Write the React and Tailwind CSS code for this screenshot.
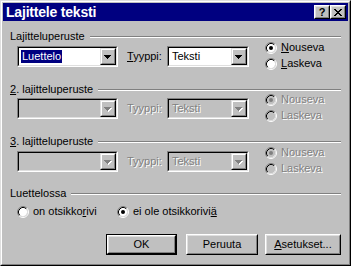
import React from "react";

const dis = "text-[#808080] [text-shadow:1px_1px_0_#ffffff]";

function Arrow({ disabled }) {
  const c = disabled ? "#808080" : "#000000";
  return (
    <svg width="8" height="5" viewBox="0 0 8 5" shapeRendering="crispEdges">
      {disabled && (
        <g fill="#ffffff">
          <rect x="1" y="1" width="7" height="1" />
          <rect x="2" y="2" width="5" height="1" />
          <rect x="3" y="3" width="3" height="1" />
          <rect x="4" y="4" width="1" height="1" />
        </g>
      )}
      <g fill={c}>
        <rect x="0" y="0" width="7" height="1" />
        <rect x="1" y="1" width="5" height="1" />
        <rect x="2" y="2" width="3" height="1" />
        <rect x="3" y="3" width="1" height="1" />
      </g>
    </svg>
  );
}

function Combo({ className, value, selected, disabled }) {
  return (
    <div className={`h-[21px] border border-t-[#808080] border-l-[#808080] border-r-white border-b-white ${className}`}>
      <div className={`h-full flex border border-t-black border-l-black border-r-[#dfdfdf] border-b-[#dfdfdf] ${disabled ? "bg-[#c0c0c0]" : "bg-white"}`}>
        <div className="flex-1 flex items-center pl-[2px] overflow-hidden">
          {value && (
            <span
              className={`px-px leading-[13px] h-[13px] ${selected ? "bg-[#000080] text-white" : disabled ? dis : "text-black"}`}
            >
              {value}
            </span>
          )}
        </div>
        <div className="w-[16px] h-full border border-t-[#dfdfdf] border-l-[#dfdfdf] border-r-black border-b-black">
          <div className="h-full border border-t-white border-l-white border-r-[#808080] border-b-[#808080] bg-[#c0c0c0] flex items-center justify-center pt-px">
            <Arrow disabled={disabled} />
          </div>
        </div>
      </div>
    </div>
  );
}

function Radio({ checked, disabled }) {
  return (
    <svg width="12" height="12" viewBox="0 0 12 12" className="shrink-0">
      <circle cx="6" cy="6" r="4.2" fill={disabled ? "#c0c0c0" : "#ffffff"} />
      <path d="M2.11 9.89 A5.5 5.5 0 0 1 9.89 2.11" fill="none" stroke="#808080" strokeWidth="1" />
      <path d="M9.89 2.11 A5.5 5.5 0 0 1 2.11 9.89" fill="none" stroke="#ffffff" strokeWidth="1" />
      <path d="M2.82 9.18 A4.5 4.5 0 0 1 9.18 2.82" fill="none" stroke="#000000" strokeWidth="1" />
      <path d="M9.18 2.82 A4.5 4.5 0 0 1 2.82 9.18" fill="none" stroke="#dfdfdf" strokeWidth="1" />
      {checked && <circle cx="6" cy="6" r="2" fill={disabled ? "#808080" : "#000000"} />}
    </svg>
  );
}

function RadioLabel({ checked, disabled, children, className = "" }) {
  return (
    <div className={`flex items-center h-[13px] ${className}`}>
      <Radio checked={checked} disabled={disabled} />
      <span className={`ml-[4px] leading-[13px] ${disabled ? dis : "text-black"}`}>{children}</span>
    </div>
  );
}

function Header({ children, className = "" }) {
  return (
    <div className={`flex items-center h-[13px] ${className}`}>
      <span className="leading-[13px] text-black whitespace-nowrap">{children}</span>
      <div className="flex-1 ml-[5px] h-[2px] border-t border-t-[#808080] border-b border-b-white" />
    </div>
  );
}

function SortRow({ disabled, className = "" }) {
  return (
    <div className={`flex items-start h-[21px] pl-[7px] ${className}`}>
      <Combo className="w-[101px]" value={disabled ? "" : "Luettelo"} selected={!disabled} disabled={disabled} />
      <div className="w-[40px] ml-[9px] h-[21px] flex items-center">
        <span className={`leading-[13px] ${disabled ? dis : "text-black"}`}>
          {disabled ? "Tyyppi:" : (<><span className="underline underline-offset-[1px]">T</span>yyppi:</>)}
        </span>
      </div>
      <Combo className="w-[82px]" value="Teksti" disabled={disabled} />
      <div className="ml-[16px] -mt-[5px] flex flex-col gap-[3px]">
        <RadioLabel checked disabled={disabled}>
          {disabled ? "Nouseva" : (<><span className="underline underline-offset-[1px]">N</span>ouseva</>)}
        </RadioLabel>
        <RadioLabel disabled={disabled}>
          {disabled ? "Laskeva" : (<><span className="underline underline-offset-[1px]">L</span>askeva</>)}
        </RadioLabel>
      </div>
    </div>
  );
}

function Button({ children, isDefault, className = "" }) {
  const inner = (
    <div className="h-full border border-t-white border-l-white border-r-black border-b-black">
      <div className="h-full border border-t-[#dfdfdf] border-l-[#dfdfdf] border-r-[#808080] border-b-[#808080] flex items-center justify-center bg-[#c0c0c0]">
        <span className="leading-[13px] text-black">{children}</span>
      </div>
    </div>
  );
  return (
    <div className={`h-[21px] ${isDefault ? "border border-black" : ""} ${className}`}>{inner}</div>
  );
}

function CapBtn({ children }) {
  return (
    <div className="w-[16px] h-[14px] border border-t-white border-l-white border-r-black border-b-black">
      <div className="h-full border border-t-[#dfdfdf] border-l-[#dfdfdf] border-r-[#808080] border-b-[#808080] bg-[#c0c0c0] flex items-center justify-center">
        {children}
      </div>
    </div>
  );
}

export default function App() {
  return (
    <div className="w-[351px] h-[266px] font-['Liberation_Sans',Arial,sans-serif] text-[11px] bg-[#c0c0c0] border border-t-[#dfdfdf] border-l-[#dfdfdf] border-r-black border-b-black">
      <div className="h-full border border-t-white border-l-white border-r-[#808080] border-b-[#808080] p-px flex flex-col">
        <div className="h-[18px] bg-[#000080] flex items-center pl-[3px] pr-[2px]">
          <span className="flex-1 text-white font-bold text-[14px] leading-[18px] tracking-[-0.2px]">Lajittele teksti</span>
          <CapBtn>
            <span className="font-bold text-[11px] leading-[10px] text-black">?</span>
          </CapBtn>
          <CapBtn>
            <svg width="8" height="7" viewBox="0 0 8 7" shapeRendering="crispEdges" fill="#000">
              <rect x="0" y="0" width="2" height="1" />
              <rect x="6" y="0" width="2" height="1" />
              <rect x="1" y="1" width="2" height="1" />
              <rect x="5" y="1" width="2" height="1" />
              <rect x="2" y="2" width="4" height="1" />
              <rect x="3" y="3" width="2" height="1" />
              <rect x="2" y="4" width="4" height="1" />
              <rect x="1" y="5" width="2" height="1" />
              <rect x="5" y="5" width="2" height="1" />
              <rect x="0" y="6" width="2" height="1" />
              <rect x="6" y="6" width="2" height="1" />
            </svg>
          </CapBtn>
        </div>

        <div className="flex flex-col pl-[7px] pr-[7px]">
          <Header className="mt-[9px]">
            La<span className="underline underline-offset-[1px]">j</span>itteluperuste
          </Header>
          <SortRow className="mt-[3px]" />

          <Header className="mt-[16px]">
            <span className="underline underline-offset-[1px]">2</span>. lajitteluperuste
          </Header>
          <SortRow disabled className="mt-[2px]" />

          <Header className="mt-[16px]">
            <span className="underline underline-offset-[1px]">3</span>. lajitteluperuste
          </Header>
          <SortRow disabled className="mt-[3px]" />

          <Header className="mt-[15px]">Luettelossa</Header>
          <div className="flex items-center h-[13px] mt-[5px] pl-[7px]">
            <RadioLabel className="w-[100px]">
              on otsikko<span className="underline underline-offset-[1px]">r</span>ivi
            </RadioLabel>
            <RadioLabel checked>
              ei ole otsikkorivi<span className="underline underline-offset-[1px]">ä</span>
            </RadioLabel>
          </div>

          <div className="flex mt-[16px] pl-[96px]">
            <Button isDefault className="w-[71px]">OK</Button>
            <Button className="w-[72px] ml-[9px]">Peruuta</Button>
            <Button className="w-[76px] ml-[7px]">
              <span className="underline underline-offset-[1px]">A</span>setukset...
            </Button>
          </div>
        </div>
      </div>
    </div>
  );
}
